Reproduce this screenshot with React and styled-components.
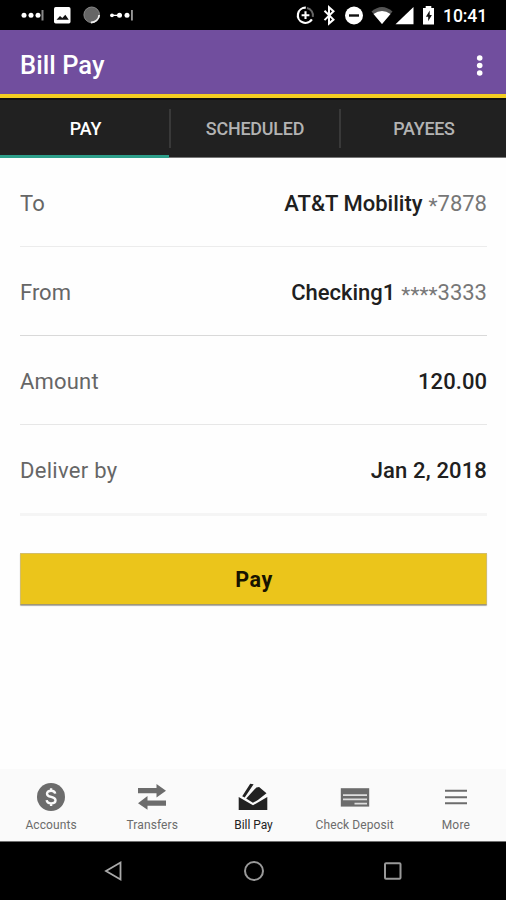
import React from 'react';
import styled, { createGlobalStyle } from 'styled-components';

const GlobalStyle = createGlobalStyle`
  * { box-sizing: border-box; }
  body { margin: 0; background: #fff; font-family: Roboto, "Liberation Sans", sans-serif; }
`;

const Screen = styled.div`
  width: 506px;
  height: 900px;
  display: flex;
  flex-direction: column;
  overflow: hidden;
  background: #fefefe;
`;

const StatusBar = styled.div`
  height: 30px;
  flex: none;
  background: #000;
  display: flex;
  justify-content: space-between;
  color: #fff;
`;

const StatusRight = styled.div`
  display: flex;
`;

const Clock = styled.span`
  width: 63px;
  font-size: 17.6px;
  font-weight: 500;
  line-height: 32px;
  letter-spacing: -0.1px;
`;

const Header = styled.header`
  height: 68px;
  flex: none;
  display: flex;
  align-items: center;
  justify-content: space-between;
  padding: 6px 0 0 20px;
  background: #714e9e;
  border-bottom: 4px solid #f3cd22;
`;

const Title = styled.h1`
  margin: 0;
  font-size: 25.5px;
  font-weight: 500;
  letter-spacing: 0.05px;
  color: #fff;
`;

const MenuButton = styled.button`
  width: 53px;
  height: 40px;
  padding: 0;
  border: 0;
  background: none;
  display: flex;
`;

const Tabs = styled.nav`
  height: 60px;
  flex: none;
  display: grid;
  grid-template-columns: 169px 170px 167px;
  grid-template-rows: 58px;
  background: #212121;
  border-top: 2px solid #111;
`;

const Tab = styled.div`
  display: flex;
  font-size: 17.9px;
  font-weight: 500;
  letter-spacing: ${(p) => p.$spacing}px;
  color: ${(p) => (p.$active ? '#fff' : '#b3b3b3')};
  border-bottom: ${(p) => (p.$active ? '3px solid #2d9f8a' : '1px solid #777')};
`;

const TabText = styled.span`
  flex: 1;
  text-align: center;
  line-height: 54px;
  padding-top: 2px;
  padding-left: ${(p) => p.$shift || 0}px;
`;

const Separator = styled.i`
  width: 2px;
  height: 39px;
  margin-top: 9px;
  background: #393939;
`;

const Form = styled.main`
  flex: 1;
  padding: 0 19px 0 20px;
`;

const Row = styled.div`
  height: ${(p) => p.$height || 89}px;
  display: flex;
  align-items: center;
  justify-content: space-between;
  padding-top: 3px;
  font-size: 22px;
  border-bottom: ${(p) => p.$line};
`;

const Label = styled.span`
  color: #666;
  letter-spacing: ${(p) => p.$spacing}px;
`;

const Value = styled.span`
  display: flex;
  gap: 6px;
  font-weight: 500;
  color: #202020;
  letter-spacing: ${(p) => p.$spacing}px;
`;

const Masked = styled.span`
  display: flex;
  font-weight: 400;
  color: #777;
  letter-spacing: 0;
`;

const Stars = styled.span`
  font-size: 21px;
  padding-top: 3px;
  height: 26px;
`;

const PayButton = styled.button`
  display: block;
  width: 467px;
  height: 52px;
  margin-top: 37px;
  padding: 0 0 0 1px;
  border: 1px solid #d3bd68;
  border-bottom-color: #a19772;
  border-radius: 1px;
  background: #ebc51b;
  box-shadow: 0 1px 1px #aaa;
  font: 700 21.5px Roboto, "Liberation Sans", sans-serif;
  letter-spacing: 0.6px;
  color: #171300;
`;

const BottomNav = styled.nav`
  height: 73px;
  flex: none;
  display: grid;
  grid-template-columns: repeat(5, 1fr);
  background: #fafafa;
  border-bottom: 1px solid #707070;
`;

const NavItem = styled.div`
  display: flex;
  flex-direction: column;
  align-items: center;
  padding: 14px 0 0 1px;
  color: ${(p) => (p.$active ? '#222' : '#6c6c6c')};
`;

const NavLabel = styled.span`
  margin-top: 3px;
  font-size: 12px;
  line-height: 18px;
  white-space: nowrap;
  letter-spacing: ${(p) => p.$spacing}px;
`;

const SystemNav = styled.div`
  height: 58px;
  flex: none;
  background: #000;
  display: grid;
  grid-template-columns: 184px 139px 140px;
`;

const SystemKey = styled.div`
  display: flex;
  justify-content: ${(p) => p.$align || 'center'};
  padding-top: 16px;
`;

const Notifications = () => (
  <svg width="150" height="30" viewBox="0 0 150 30" fill="#fff">
    <circle cx="24" cy="15.3" r="2.5" /><circle cx="31" cy="15.3" r="2.5" /><circle cx="38" cy="15.3" r="2.5" />
    <rect x="41.5" y="10" width="2" height="10.5" fill="#888" />
    <rect x="54" y="7" width="16.5" height="16.5" rx="1.7" />
    <path d="m56.5 19.7 3.5-3.7 2.3 2 3-3.2 3.5 4.9Z" fill="#111" />
    <circle cx="91.7" cy="14.8" r="7.8" fill="#666" stroke="#888" />
    <path d="M99.2 15a8 8 0 0 1-8.3 7.5" fill="none" stroke="#eee" strokeWidth="1.8" />
    <circle cx="112" cy="15.3" r="1.9" /><circle cx="119.5" cy="15.3" r="2.5" /><circle cx="127" cy="15.3" r="2.5" />
    <path d="M112 14.7h10v1.3h-10z" />
    <rect x="131.2" y="10" width="1.5" height="10.5" fill="#bbb" />
  </svg>
);

const SystemStatus = () => (
  <svg width="147" height="30" viewBox="296 0 147 30" fill="none">
    <path d="M305.8 7.7a7.6 7.6 0 1 0 6.1 11.6" stroke="#fff" strokeWidth="2.2" />
    <path d="M307 7.9a7.6 7.6 0 0 1 5.8 9" stroke="#666" strokeWidth="2" />
    <path d="M305.5 11.3v7.8M301.6 15.2h7.8" stroke="#fff" strokeWidth="2.1" />
    <path d="m324.5 10.8 9 8.8-4.5 4V7.3l4.5 4-9 8.8" stroke="#fff" strokeWidth="2" />
    <circle cx="354" cy="15.5" r="9" fill="#fff" />
    <path d="M349 15.5h10" stroke="#111" strokeWidth="2.4" />
    <path d="M371.5 11.5q10.5-9 21 0L382 24Z" fill="#555" />
    <path d="M373.5 14q8.5-5.8 17 0L382 24Z" fill="#fff" />
    <path d="M395.5 24.3 413.5 7v17.3Z" fill="#fff" />
    <path d="M423 8h2.7V6h5.6v2h2.7v16.5h-11Z" fill="#fff" />
    <path d="m429.7 10.5-3.8 6.3h2.3v4.5l3.7-6.3h-2.2Z" fill="#111" />
  </svg>
);

const MoreDots = () => (
  <svg width="53" height="40" fill="#fff">
    <circle cx="26.7" cy="13" r="2.8" /><circle cx="26.7" cy="20.5" r="2.8" /><circle cx="26.7" cy="28" r="2.8" />
  </svg>
);

const icons = {
  accounts: (
    <>
      <circle cx="16" cy="14" r="14" fill="currentColor" />
      <path d="M20.2 10.6c-.3-1.8-1.8-2.9-4.1-2.9-2.5 0-4.1 1.2-4.1 3 0 4.4 8.5 2.1 8.5 6.6 0 1.9-1.8 3.1-4.4 3.1-2.5 0-4.2-1.2-4.4-3.2M16.1 5.3v2.4M16.1 20.4v2.5" fill="none" stroke="#fafafa" strokeWidth="2.4" />
    </>
  ),
  transfers: (
    <path d="M2 5h18.5V1L30 7.7l-9.5 6.8v-4.2H2ZM30 17.4H11.5V13L2 20.2l9.5 6.5v-4H30Z" fill="currentColor" />
  ),
  bill: (
    <path d="M1.7 14 16 22.2 30.3 14v13H1.7ZM5.2 13.2 13.2.8l3.4.5L7.7 14.6ZM9.2 15.5 19.4 4.4l2.7-.3 7.4 6.2-8.6 6.7-5 2.8Z" fill="currentColor" />
  ),
  check: (
    <>
      <path d="M1.8 5.2h28.4v18.4H1.8Z" fill="currentColor" />
      <path d="M4 12.2h24M4 16.4h24M15.5 20.7H28" stroke="#dedede" strokeWidth="1.7" />
    </>
  ),
  more: (
    <path d="M5 7.8h22M5 14.2h22M5 20.3h22" stroke="currentColor" strokeWidth="2.1" />
  ),
};

const NavIcon = ({ name }) => (
  <svg width="32" height="30" viewBox="0 0 32 30">{icons[name]}</svg>
);

const rows = [
  { label: 'To', value: 'AT&T Mobility', stars: '*', digits: '7878', line: '1px solid #ececec', labelSpacing: 0.2, valueSpacing: 0 },
  { label: 'From', value: 'Checking1', stars: '****', digits: '3333', line: '1px solid #d9d9d9', labelSpacing: 0, valueSpacing: 0 },
  { label: 'Amount', value: '120.00', line: '1px solid #e7e7e7', labelSpacing: 0.2, valueSpacing: 0.05 },
  { label: 'Deliver by', value: 'Jan 2, 2018', line: '3px solid #f5f5f5', height: 91, labelSpacing: 0.3, valueSpacing: 0.15 },
];

const destinations = [
  { label: 'Accounts', icon: 'accounts', spacing: 0.1 },
  { label: 'Transfers', icon: 'transfers', spacing: 0.1 },
  { label: 'Bill Pay', icon: 'bill', spacing: -0.05, active: true },
  { label: 'Check Deposit', icon: 'check', spacing: 0.1 },
  { label: 'More', icon: 'more', spacing: 0.2 },
];

export default function App() {
  return (
    <>
      <GlobalStyle />
      <Screen>
        <StatusBar>
          <Notifications />
          <StatusRight>
            <SystemStatus />
            <Clock>10:41</Clock>
          </StatusRight>
        </StatusBar>
        <Header>
          <Title>Bill Pay</Title>
          <MenuButton aria-label="More options"><MoreDots /></MenuButton>
        </Header>
        <Tabs>
          <Tab $active $spacing={-0.2}><TabText $shift={2}>PAY</TabText></Tab>
          <Tab $spacing={-0.2}><Separator /><TabText>SCHEDULED</TabText></Tab>
          <Tab $spacing={-0.25}><Separator /><TabText $shift={1}>PAYEES</TabText></Tab>
        </Tabs>
        <Form>
          {rows.map((r) => (
            <Row key={r.label} $line={r.line} $height={r.height}>
              <Label $spacing={r.labelSpacing}>{r.label}</Label>
              <Value $spacing={r.valueSpacing}>
                {r.value}
                {r.digits && <Masked><Stars>{r.stars}</Stars>{r.digits}</Masked>}
              </Value>
            </Row>
          ))}
          <PayButton>Pay</PayButton>
        </Form>
        <BottomNav>
          {destinations.map((d) => (
            <NavItem key={d.label} $active={d.active}>
              <NavIcon name={d.icon} />
              <NavLabel $spacing={d.spacing}>{d.label}</NavLabel>
            </NavItem>
          ))}
        </BottomNav>
        <SystemNav>
          <SystemKey $align="flex-end">
            <svg width="81" height="26" fill="none" stroke="#aaa" strokeWidth="1.8"><path d="M17.5 4.5v17L3 13Z" /></svg>
          </SystemKey>
          <SystemKey>
            <svg width="26" height="26" fill="none" stroke="#999" strokeWidth="2"><circle cx="13" cy="13" r="9" /></svg>
          </SystemKey>
          <SystemKey>
            <svg width="26" height="26" fill="none" stroke="#999" strokeWidth="2"><rect x="5" y="5.3" width="15.5" height="15.5" rx="1" /></svg>
          </SystemKey>
        </SystemNav>
      </Screen>
    </>
  );
}
